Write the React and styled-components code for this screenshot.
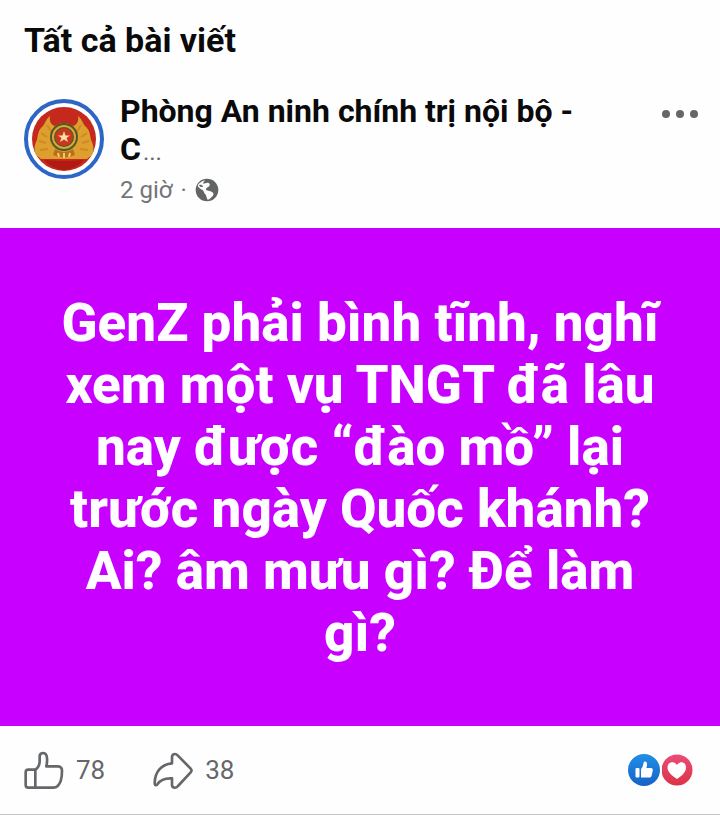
import styled, { createGlobalStyle } from "styled-components";

function Avatar() {
  return (
    <AvatarLink href="#profile" aria-label="Phòng An ninh chính trị nội bộ">
      <svg viewBox="0 0 80 80" width="80" height="80" aria-hidden="true">
        <circle cx="40" cy="40" r="38" fill="#fff" stroke="#2d66c4" strokeWidth="4" />
        <circle cx="40" cy="40" r="32" fill="#c5281c" />
        <path
          d="M26 17C22 20 22 23 19 27C14 31 14 36 13 41C10 46 10 52 12 56L17 60H63L68 56C70 52 70 46 67 41C66 36 66 31 61 27C58 23 58 20 54 17C55 22 53 26 49 27Q40 21 31 27C27 26 25 22 26 17Z"
          fill="#dda02e"
        />
        <path
          d="M23 26L27 32M17 34L23 38M15 42L22 44M16 51L24 50M57 26L53 32M63 34L57 38M65 42L58 44M64 51L56 50"
          stroke="#cf8a26"
          strokeWidth="2"
        />
        <circle cx="40" cy="38" r="14" fill="#4d5a25" />
        <circle cx="40" cy="38" r="11" fill="none" stroke="#d9a53a" strokeWidth="2" />
        <circle cx="40" cy="38" r="9" fill="#c8371f" />
        <path
          d="M40 32L41.500 36.500H46L42.500 39L44 43L40 40.500L36 43L37.500 39L34 36.500H38.500Z"
          fill="#fbe3a0"
        />
        <path d="M31 50Q40 56 49 50L51 56Q40 61 29 56Z" fill="#b8701c" />
        <path d="M34 54L35 58M40 54V59M46 54L45 58" stroke="#f1cd62" strokeWidth="2" />
        <path d="M20 61Q40 63 60 61Q52 70 40 71Q28 70 20 61Z" fill="#b01a12" />
      </svg>
    </AvatarLink>
  );
}

function Globe() {
  return (
    <svg viewBox="0 0 72 72" width="24" height="24" role="img" aria-label="Công khai">
      <circle cx="36" cy="36" r="34" fill="#626466" />
      <path
        d="M8 22C13 15 20 9 30 7C28 11 23 13 25 17C31 17 37 12 42 16C47 20 43 26 38 28C34 30 32 33 34 37C39 39 47 38 54 44C58 48 54 54 49 58C45 62 42 65 38 65C34 60 35 54 31 49C27 45 27 40 23 36C17 34 10 30 8 22Z"
        fill="#fff"
      />
      <path d="M12 21C17 19 22 21 25 25C22 29 14 28 12 21Z" fill="#626466" />
    </svg>
  );
}

function LikeIcon() {
  return (
    <ActionIcon viewBox="0 0 120 120" width="40" height="40" aria-hidden="true">
      <path d="M34 59H13Q5 59 5 67V105Q5 113 13 113H34Z" />
      <path d="M34 59C42 54 47 44 47 32V18Q48 9 58 9Q68 10 69 24Q70 36 67 49H102Q114 50 114 62C114 82 109 100 101 108Q96 113 88 113H34" />
    </ActionIcon>
  );
}

function ShareIcon() {
  return (
    <ActionIcon viewBox="0 0 120 120" width="40" height="40" aria-hidden="true">
      <path d="M57 40V20Q58 12 66 12Q70 12 74 16L113 56Q118 62 113 67L75 108Q70 114 64 113Q57 112 57 104V85C37 84 22 89 13 103Q10 107 7 105Q5 103 5 99C6 66 24 43 57 40Z" />
    </ActionIcon>
  );
}

function Reactions() {
  return (
    <ReactionsButton type="button" aria-label="Xem ai đã bày tỏ cảm xúc">
      <svg viewBox="0 0 66 36" width="66" height="36" aria-hidden="true">
        <defs>
          <linearGradient id="like" x1="0" y1="0" x2="0" y2="1">
            <stop offset="0" stopColor="#1f8fe6" />
            <stop offset="1" stopColor="#1762c8" />
          </linearGradient>
          <linearGradient id="love" x1="0" y1="0" x2="0" y2="1">
            <stop offset="0" stopColor="#ea4c78" />
            <stop offset="1" stopColor="#dc3346" />
          </linearGradient>
        </defs>
        <circle cx="50" cy="18" r="15.5" fill="url(#love)" />
        <circle cx="17" cy="18" r="18" fill="#fff" />
        <circle cx="17" cy="18" r="16" fill="url(#like)" />
        <rect x="8.5" y="16" width="4" height="9.5" rx="1" fill="#fff" />
        <path
          d="M14 17C16 15 16 13 16.500 11C17 9 20 9 20 12C20 14 19.500 15 19.500 16H24C26 16 26 18 25.500 20L24.500 24C24 25 23.500 25.500 22 25.500H14Z"
          fill="#fff"
        />
        <path
          d="M50 27C45 24 40.500 20 40.500 15.500C40.500 10 47 8.500 50 13C53 8.500 59 10 59 15.500C59 20 55 24 50 27Z"
          fill="#fff"
        />
      </svg>
    </ReactionsButton>
  );
}

function App() {
  return (
    <Page>
      <GlobalStyle />
      <Heading>Tất cả bài viết</Heading>
      <Post>
        <PostHeader>
          <Avatar />
          <Info>
            <Name>
              Phòng An ninh chính trị nội bộ - C<Ellipsis>...</Ellipsis>
            </Name>
            <Meta>
              2 giờ <span>·</span>
              <Globe />
            </Meta>
          </Info>
          <MoreButton type="button" aria-label="Tùy chọn khác">
            <svg viewBox="0 0 36 8" width="36" height="8" fill="#666" aria-hidden="true">
              <circle cx="4" cy="4" r="4" />
              <circle cx="18" cy="4" r="4" />
              <circle cx="32" cy="4" r="4" />
            </svg>
          </MoreButton>
        </PostHeader>
        <Banner>
          <BannerText>
            GenZ phải bình tĩnh, nghĩ xem một vụ TNGT đã lâu nay được “đào mồ” lại
            trước ngày Quốc khánh? Ai? âm mưu gì? Để làm gì?
          </BannerText>
        </Banner>
        <Footer>
          <ActionButton type="button" aria-label="Thích 78">
            <LikeIcon />
            78
          </ActionButton>
          <ActionButton type="button" aria-label="Chia sẻ 38">
            <ShareIcon />
            38
          </ActionButton>
          <Reactions />
        </Footer>
      </Post>
    </Page>
  );
}

export default App;

const GlobalStyle = createGlobalStyle`
  * {
    box-sizing: border-box;
  }

  body {
    margin: 0;
    background-color: #fefefe;
    color: #0a0a0a;
    font-family: Roboto, "Noto Sans", sans-serif;
  }
`;

const Page = styled.main`
  width: 100%;
`;

const Heading = styled.h1`
  margin: 0;
  padding: 20px 24px;
  font-size: 34px;
  font-weight: 700;
  line-height: 40px;
`;

const Post = styled.article`
  border-bottom: 2px solid #c4c4c4;
`;

const PostHeader = styled.header`
  display: flex;
  align-items: flex-start;
  gap: 16px;
  padding: 12px 20px 22px 24px;
`;

const AvatarLink = styled.a`
  display: block;
  flex-shrink: 0;
  margin-top: 7px;

  svg {
    display: block;
  }
`;

const Info = styled.div`
  flex: 1;
  min-width: 0;
`;

const Name = styled.h2`
  margin: 0;
  font-size: 32px;
  font-weight: 700;
  line-height: 38px;
`;

const Ellipsis = styled.span`
  margin-left: 2px;
  color: #65676b;
  font-size: 24px;
  font-weight: 400;
  line-height: 24px;
`;

const Meta = styled.div`
  display: flex;
  align-items: center;
  gap: 8px;
  margin-top: 6px;
  color: #737578;
  font-size: 24px;
  line-height: 32px;
`;

const MoreButton = styled.button`
  display: flex;
  flex-shrink: 0;
  margin-left: 40px;
  padding: 18px 2px;
  border: none;
  background: none;
  cursor: pointer;
`;

const Banner = styled.div`
  padding: 64px 56px 62px;
  background-color: #c800ff;
`;

const BannerText = styled.p`
  margin: 0;
  color: white;
  font-size: 53px;
  font-weight: 800;
  line-height: 62px;
  text-align: center;
`;

const Footer = styled.footer`
  display: flex;
  align-items: center;
  gap: 48px;
  padding: 24px 27px 24px 24px;
`;

const ActionButton = styled.button`
  display: flex;
  align-items: center;
  gap: 12px;
  padding: 0;
  border: none;
  background: none;
  color: #65676b;
  font-family: inherit;
  font-size: 26px;
  line-height: 40px;
  cursor: pointer;
`;

const ActionIcon = styled.svg`
  fill: none;
  stroke: #65676b;
  stroke-width: 8;
  stroke-linejoin: round;
  stroke-linecap: round;
`;

const ReactionsButton = styled.button`
  display: flex;
  margin-left: auto;
  padding: 0;
  border: none;
  background: none;
  cursor: pointer;
`;
